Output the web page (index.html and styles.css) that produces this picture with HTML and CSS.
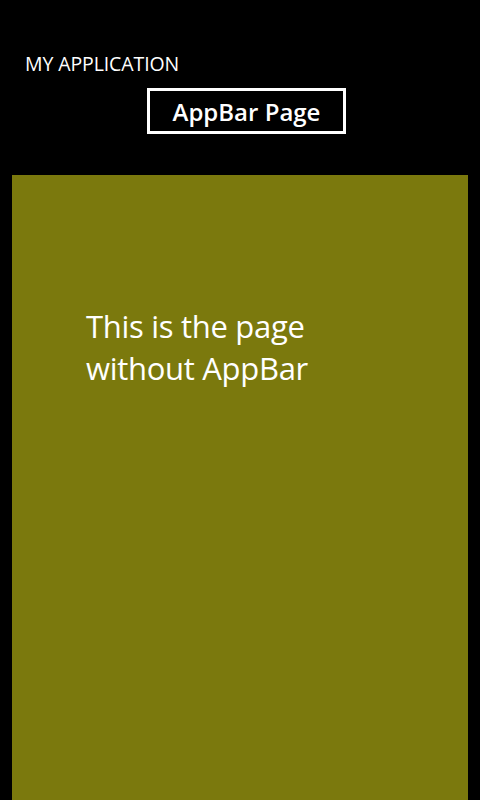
FILE: index.html
```html
<!DOCTYPE html>
<html>
<head>
<meta charset="utf-8">
<link rel="stylesheet" href="styles.css">
</head>
<body>
<div class="screen">
  <header class="header">
    <div class="app-title">MY APPLICATION</div>
    <div class="page-button">AppBar Page</div>
  </header>
  <main class="content">
    <p class="message">This is the page<br>without AppBar</p>
  </main>
</div>
</body>
</html>
```

FILE: styles.css
```css
html, body {
  margin: 0;
  padding: 0;
  background: #000;
}
.screen {
  width: 480px;
  height: 800px;
  display: flex;
  flex-direction: column;
  font-family: "Open Sans", "Noto Sans", sans-serif;
  color: #fff;
  overflow: hidden;
}
.header {
  padding: 51px 0 0 25px;
  height: 124px;
  box-sizing: border-box;
}
.app-title {
  font-size: 19.5px;
  line-height: 26px;
  letter-spacing: -0.1px;
}
.page-button {
  margin: 11px 0 0 122px;
  width: 199px;
  height: 46px;
  box-sizing: border-box;
  border: 3px solid #fff;
  display: flex;
  align-items: center;
  justify-content: center;
  font-size: 24px;
  font-weight: 600;
  letter-spacing: 0;
}
.content {
  flex: 1;
  margin: 51px 12px 0 12px;
  background: #7b790d;
  padding: 0 0 0 74px;
}
.message {
  margin: 0;
  padding-top: 130px;
  font-size: 31px;
  line-height: 42px;
  letter-spacing: -0.3px;
}
```
